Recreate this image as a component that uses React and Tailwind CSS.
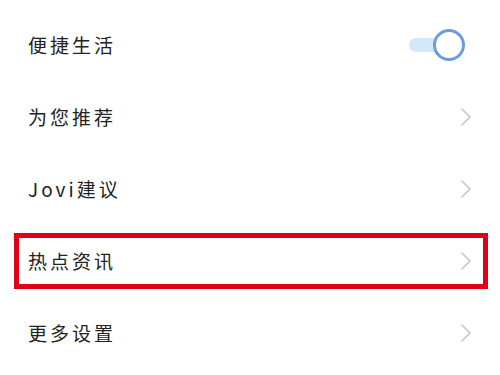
import React from "react";

const font = { fontFamily: '"Noto Sans CJK SC", "Noto Sans", sans-serif' };

function Chevron() {
  return (
    <svg width="12" height="20" viewBox="0 0 12 20" fill="none">
      <path d="M2 2 L10 10 L2 18" stroke="#c4c4c4" strokeWidth="1.6" strokeLinecap="round" strokeLinejoin="round" />
    </svg>
  );
}

function Toggle() {
  return (
    <div className="relative w-[56px] h-[32px] flex items-center">
      <div className="w-[40px] h-[14px] bg-[#d4e8fb] rounded-l-full" />
      <div className="absolute right-0 top-0 w-[32px] h-[32px] rounded-full bg-white border-[3px] border-[#6b9be0]" />
    </div>
  );
}

function Row({ label, right }) {
  return (
    <div className="h-[72px] flex items-center justify-between pl-[28px] pr-[28px]">
      <span className="text-[19px] text-[#222] tracking-[3px]">{label}</span>
      {right}
    </div>
  );
}

export default function App() {
  return (
    <div className="w-[500px] h-[375px] bg-white pt-[9px] overflow-hidden" style={font}>
      <div className="h-[72px] flex items-center justify-between pl-[28px] pr-[35px]">
        <span className="text-[19px] text-[#222] tracking-[3px]">便捷生活</span>
        <Toggle />
      </div>
      <Row label="为您推荐" right={<Chevron />} />
      <Row label="Jovi建议" right={<Chevron />} />
      <div className="h-[72px] py-[8px] pl-[14px] pr-[12px]">
        <div className="h-full border-[5px] border-[#e0001a] flex items-center justify-between pl-[9px] pr-[11px]">
          <span className="text-[19px] text-[#222] tracking-[3px]">热点资讯</span>
          <Chevron />
        </div>
      </div>
      <Row label="更多设置" right={<Chevron />} />
    </div>
  );
}
